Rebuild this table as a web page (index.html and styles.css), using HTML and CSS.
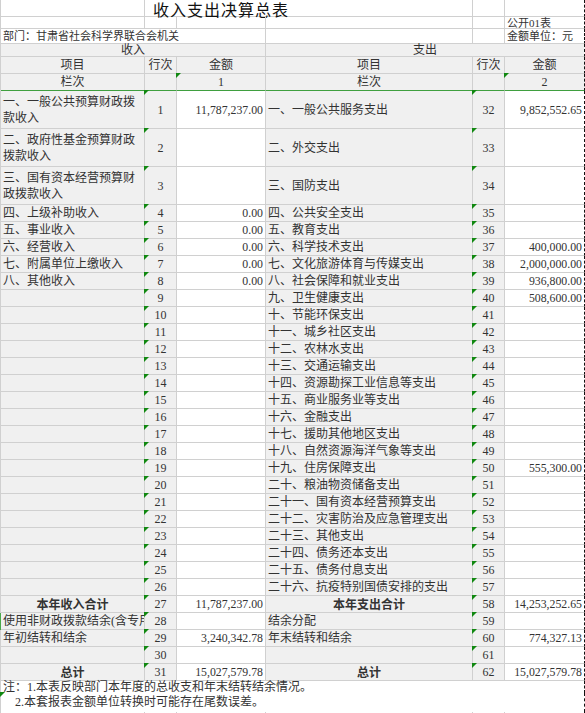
FILE: index.html
```html
<!DOCTYPE html>
<html lang="zh-CN">
<head>
<meta charset="utf-8">
<title>收入支出决算总表</title>
<link rel="stylesheet" href="styles.css">
</head>
<body>
<div class="sheet">
  <!-- title rows -->
  <div class="c"></div>
  <div class="c s3 title">收入支出决算总表</div>
  <div class="c"></div>
  <div class="c last"></div>

  <div class="c"></div><div class="c"></div><div class="c"></div><div class="c"></div><div class="c"></div>
  <div class="c last small">公开01表</div>

  <div class="c s3 small">部门：甘肃省社会科学界联合会机关</div>
  <div class="c"></div><div class="c"></div>
  <div class="c last small">金额单位：元</div>

  <div class="c s3 g ctr">收入</div>
  <div class="c s3 g ctr last">支出</div>

  <div class="c g ctr">项目</div><div class="c g ctr">行次</div><div class="c g ctr">金额</div>
  <div class="c g ctr">项目</div><div class="c g ctr">行次</div><div class="c g ctr last">金额</div>

  <div class="c g ctr gl">栏次</div><div class="c g gl"></div><div class="c g ctr gl mk">1</div>
  <div class="c g ctr gl">栏次</div><div class="c g gl"></div><div class="c g ctr gl mk last">2</div>

  <!-- rows 1-3 -->
  <div class="c g wrap">一、一般公共预算财政拨款收入</div><div class="c g ctr mk">1</div><div class="c num">11,787,237.00</div>
  <div class="c g">一、一般公共服务支出</div><div class="c g ctr mk">32</div><div class="c num last">9,852,552.65</div>

  <div class="c g wrap">二、政府性基金预算财政拨款收入</div><div class="c g ctr mk">2</div><div class="c num"></div>
  <div class="c g">二、外交支出</div><div class="c g ctr mk">33</div><div class="c num last"></div>

  <div class="c g wrap">三、国有资本经营预算财政拨款收入</div><div class="c g ctr mk">3</div><div class="c num"></div>
  <div class="c g">三、国防支出</div><div class="c g ctr mk">34</div><div class="c num last"></div>

  <!-- rows 4-26 -->
  <div class="c g">四、上级补助收入</div><div class="c g ctr mk">4</div><div class="c num">0.00</div>
  <div class="c g">四、公共安全支出</div><div class="c g ctr mk">35</div><div class="c num last"></div>

  <div class="c g">五、事业收入</div><div class="c g ctr mk">5</div><div class="c num">0.00</div>
  <div class="c g">五、教育支出</div><div class="c g ctr mk">36</div><div class="c num last"></div>

  <div class="c g">六、经营收入</div><div class="c g ctr mk">6</div><div class="c num">0.00</div>
  <div class="c g">六、科学技术支出</div><div class="c g ctr mk">37</div><div class="c num last">400,000.00</div>

  <div class="c g">七、附属单位上缴收入</div><div class="c g ctr mk">7</div><div class="c num">0.00</div>
  <div class="c g">七、文化旅游体育与传媒支出</div><div class="c g ctr mk">38</div><div class="c num last">2,000,000.00</div>

  <div class="c g">八、其他收入</div><div class="c g ctr mk">8</div><div class="c num">0.00</div>
  <div class="c g">八、社会保障和就业支出</div><div class="c g ctr mk">39</div><div class="c num last">936,800.00</div>

  <div class="c g"></div><div class="c g ctr mk">9</div><div class="c num"></div>
  <div class="c g">九、卫生健康支出</div><div class="c g ctr mk">40</div><div class="c num last">508,600.00</div>

  <div class="c g"></div><div class="c g ctr mk">10</div><div class="c num"></div>
  <div class="c g">十、节能环保支出</div><div class="c g ctr mk">41</div><div class="c num last"></div>

  <div class="c g"></div><div class="c g ctr mk">11</div><div class="c num"></div>
  <div class="c g">十一、城乡社区支出</div><div class="c g ctr mk">42</div><div class="c num last"></div>

  <div class="c g"></div><div class="c g ctr mk">12</div><div class="c num"></div>
  <div class="c g">十二、农林水支出</div><div class="c g ctr mk">43</div><div class="c num last"></div>

  <div class="c g"></div><div class="c g ctr mk">13</div><div class="c num"></div>
  <div class="c g">十三、交通运输支出</div><div class="c g ctr mk">44</div><div class="c num last"></div>

  <div class="c g"></div><div class="c g ctr mk">14</div><div class="c num"></div>
  <div class="c g">十四、资源勘探工业信息等支出</div><div class="c g ctr mk">45</div><div class="c num last"></div>

  <div class="c g"></div><div class="c g ctr mk">15</div><div class="c num"></div>
  <div class="c g">十五、商业服务业等支出</div><div class="c g ctr mk">46</div><div class="c num last"></div>

  <div class="c g"></div><div class="c g ctr mk">16</div><div class="c num"></div>
  <div class="c g">十六、金融支出</div><div class="c g ctr mk">47</div><div class="c num last"></div>

  <div class="c g"></div><div class="c g ctr mk">17</div><div class="c num"></div>
  <div class="c g">十七、援助其他地区支出</div><div class="c g ctr mk">48</div><div class="c num last"></div>

  <div class="c g"></div><div class="c g ctr mk">18</div><div class="c num"></div>
  <div class="c g">十八、自然资源海洋气象等支出</div><div class="c g ctr mk">49</div><div class="c num last"></div>

  <div class="c g"></div><div class="c g ctr mk">19</div><div class="c num"></div>
  <div class="c g">十九、住房保障支出</div><div class="c g ctr mk">50</div><div class="c num last">555,300.00</div>

  <div class="c g"></div><div class="c g ctr mk">20</div><div class="c num"></div>
  <div class="c g">二十、粮油物资储备支出</div><div class="c g ctr mk">51</div><div class="c num last"></div>

  <div class="c g"></div><div class="c g ctr mk">21</div><div class="c num"></div>
  <div class="c g">二十一、国有资本经营预算支出</div><div class="c g ctr mk">52</div><div class="c num last"></div>

  <div class="c g"></div><div class="c g ctr mk">22</div><div class="c num"></div>
  <div class="c g">二十二、灾害防治及应急管理支出</div><div class="c g ctr mk">53</div><div class="c num last"></div>

  <div class="c g"></div><div class="c g ctr mk">23</div><div class="c num"></div>
  <div class="c g">二十三、其他支出</div><div class="c g ctr mk">54</div><div class="c num last"></div>

  <div class="c g"></div><div class="c g ctr mk">24</div><div class="c num"></div>
  <div class="c g">二十四、债务还本支出</div><div class="c g ctr mk">55</div><div class="c num last"></div>

  <div class="c g"></div><div class="c g ctr mk">25</div><div class="c num"></div>
  <div class="c g">二十五、债务付息支出</div><div class="c g ctr mk">56</div><div class="c num last"></div>

  <div class="c g"></div><div class="c g ctr mk">26</div><div class="c num"></div>
  <div class="c g">二十六、抗疫特别国债安排的支出</div><div class="c g ctr mk">57</div><div class="c num last"></div>

  <!-- totals -->
  <div class="c g ctr b">本年收入合计</div><div class="c g ctr mk">27</div><div class="c num">11,787,237.00</div>
  <div class="c g ctr b">本年支出合计</div><div class="c g ctr mk">58</div><div class="c num last">14,253,252.65</div>

  <div class="c g clip sel">使用非财政拨款结余(含专用结余)</div><div class="c g ctr mk">28</div><div class="c num"></div>
  <div class="c g">结余分配</div><div class="c g ctr mk">59</div><div class="c num last"></div>

  <div class="c g">年初结转和结余</div><div class="c g ctr mk">29</div><div class="c num">3,240,342.78</div>
  <div class="c g">年末结转和结余</div><div class="c g ctr mk">60</div><div class="c num last">774,327.13</div>

  <div class="c g"></div><div class="c g ctr mk">30</div><div class="c num"></div>
  <div class="c g"></div><div class="c g ctr mk">61</div><div class="c num last"></div>

  <div class="c g ctr b">总计</div><div class="c g ctr mk">31</div><div class="c num">15,027,579.78</div>
  <div class="c g ctr b">总计</div><div class="c g ctr mk">62</div><div class="c num last">15,027,579.78</div>

  <!-- notes -->
  <div class="c s6 note last">注：1.本表反映部门本年度的总收支和年末结转结余情况。</div>
  <div class="c s6 note note2 mk last">2.本套报表金额单位转换时可能存在尾数误差。</div>

  <div class="c"></div><div class="c"></div><div class="c"></div><div class="c"></div><div class="c"></div><div class="c last"></div>
</div>
</body>
</html>
```

FILE: styles.css
```css
html, body {
  margin: 0;
  padding: 0;
  background: #ffffff;
}

body {
  overflow: hidden;
  font-family: "Liberation Serif", "Noto Sans CJK SC", serif;
  font-size: 12px;
  color: #333333;
}

.sheet {
  display: grid;
  width: 584px;
  border-left: 1px solid #d0d0d0;
  grid-template-columns: 144px 32px 89px 207px 32px 80px;
  grid-template-rows: 17px 12px 15px 13px 17px 17px 38px 38px 38px repeat(28, 17px) 12px 19px 17px;
}

.c {
  position: relative;
  box-sizing: border-box;
  display: flex;
  align-items: center;
  padding: 0 1px 0 2px;
  border-right: 1px solid #d0d0d0;
  border-bottom: 1px solid #d0d0d0;
  white-space: nowrap;
  line-height: 16px;
  min-width: 0;
}

.g { background: #f0f0f0; }
.ctr { justify-content: center; padding: 0; }
.num {
  justify-content: flex-end;
  padding: 0 2px 0 0;
  background: #ffffff;
  font-size: 11.8px;
}
.b { font-weight: bold; font-family: "Noto Sans CJK SC", sans-serif; }
.s3 { grid-column: span 3; }
.s6 { grid-column: span 6; }
.small { font-size: 11px; }

.last { border-right: 1px dashed #111111; }

.gl { border-bottom-color: #3f9f3f; }

.wrap {
  white-space: normal;
  line-height: 16px;
  word-break: break-all;
}

.clip { overflow: hidden; }

.sel { box-shadow: -1px 0 0 #4aa84a; }

.title {
  font-family: "Noto Sans CJK SC", sans-serif;
  font-size: 16px;
  letter-spacing: 1px;
  color: #111111;
  padding-left: 8px;
  padding-top: 2px;
  align-items: flex-start;
  line-height: 14px;
}

.mk::before {
  content: "";
  position: absolute;
  top: -1px;
  left: -1px;
  width: 0;
  height: 0;
  border-top: 5px solid #118811;
  border-right: 5px solid transparent;
}

.note {
  border-bottom: none;
}

.note2 {
  align-items: flex-start;
  padding-left: 14px;
  padding-top: 1px;
}
```
